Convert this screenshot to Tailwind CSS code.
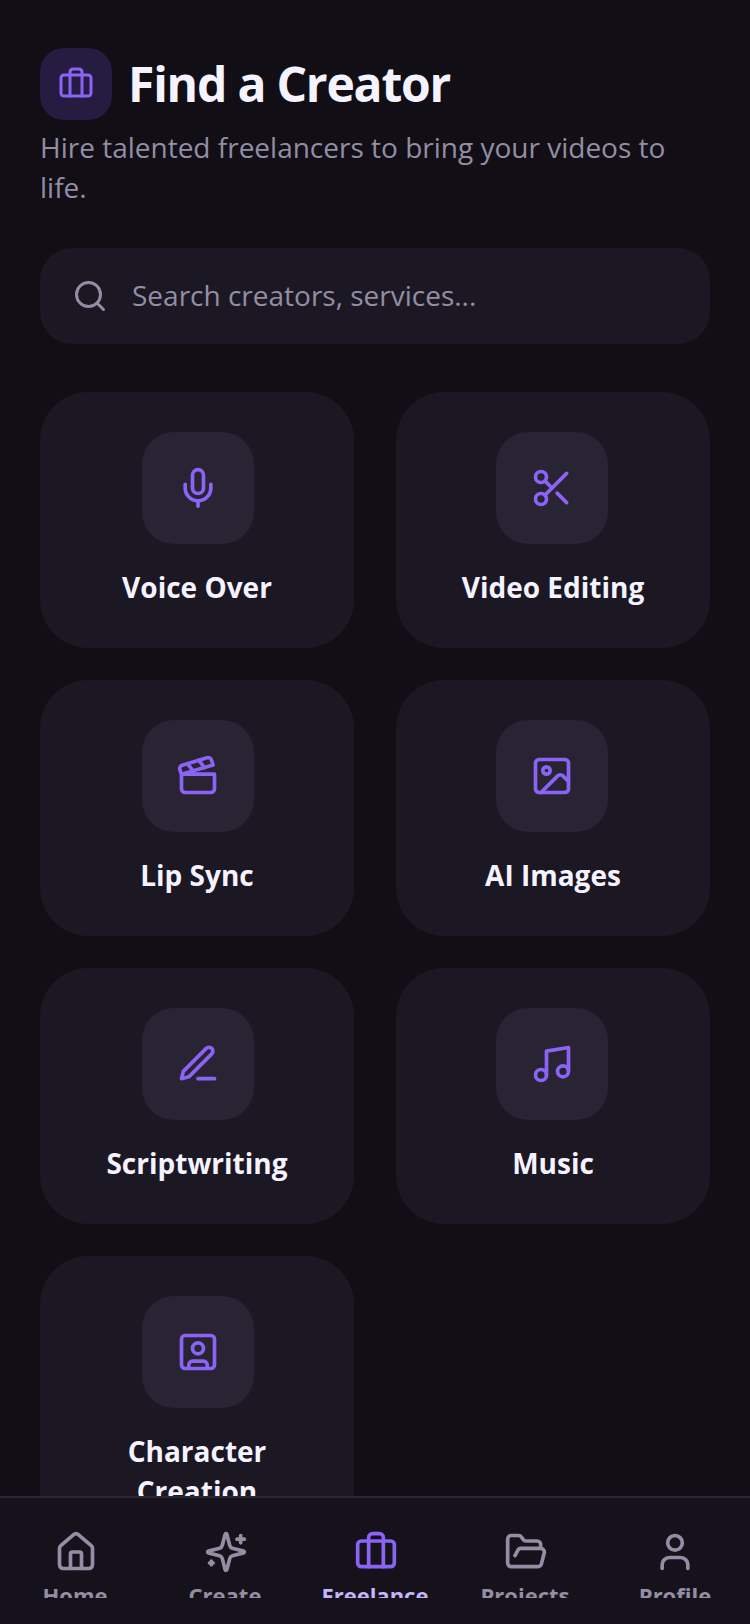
<!DOCTYPE html>
<html lang="en">
  <head>
    <meta charset="UTF-8" />
    <meta name="viewport" content="width=device-width, initial-scale=1.0" />
    <title>Find a Creator</title>
    <script src="https://cdn.jsdelivr.net/npm/@tailwindcss/browser@4"></script>
  </head>
  <body class="bg-[#110e16] font-['Open_Sans',sans-serif] h-[1624px] w-[750px] flex flex-col overflow-hidden">
    <!-- Main content -->
    <main class="flex-1 min-h-0 overflow-hidden px-10 pt-12">
      <div class="flex items-center gap-4">
        <div class="w-[72px] h-[72px] rounded-[24px] bg-[#261c42] flex items-center justify-center text-[#8b63f5]">
          <svg class="w-9 h-9" viewBox="0 0 24 24" fill="none" stroke="currentColor" stroke-width="2" stroke-linecap="round" stroke-linejoin="round"><path d="M16 20V4a2 2 0 0 0-2-2h-4a2 2 0 0 0-2 2v16"/><rect width="20" height="14" x="2" y="6" rx="2"/></svg>
        </div>
        <h1 class="text-[48px] leading-[56px] font-bold text-[#f5f3ff] tracking-[-1.2px]">Find a Creator</h1>
      </div>
      <p class="mt-[7px] text-[28px] leading-[40px] text-[#938ea3]">Hire talented freelancers to bring your videos to life.</p>

      <!-- Search -->
      <div class="mt-[41px] h-24 rounded-[32px] bg-[#1b1824] flex items-center pl-8 gap-6 text-[#938ea3]">
        <svg class="w-9 h-9" viewBox="0 0 24 24" fill="none" stroke="currentColor" stroke-width="2" stroke-linecap="round" stroke-linejoin="round"><path d="m21 21-4.34-4.34"/><circle cx="11" cy="11" r="8"/></svg>
        <span class="text-[28px] pb-[2px]">Search creators, services...</span>
      </div>

      <!-- Categories -->
      <div class="mt-12 grid grid-cols-2 gap-x-[42px] gap-y-8">
        <div class="h-[256px] rounded-[48px] bg-[#1b1824] pt-10 flex flex-col items-center">
          <div class="ml-[2px] w-28 h-28 rounded-[32px] bg-[#282433] flex items-center justify-center text-[#8b63f5]">
            <svg class="w-11 h-11" viewBox="0 0 24 24" fill="none" stroke="currentColor" stroke-width="2" stroke-linecap="round" stroke-linejoin="round"><path d="M12 2a3 3 0 0 0-3 3v7a3 3 0 0 0 6 0V5a3 3 0 0 0-3-3Z"/><path d="M19 10v2a7 7 0 0 1-14 0v-2"/><line x1="12" x2="12" y1="19" y2="22"/></svg>
          </div>
          <span class="mt-[23px] text-[28px] leading-[40px] font-bold text-[#f5f3ff] text-center">Voice Over</span>
        </div>
        <div class="h-[256px] rounded-[48px] bg-[#1b1824] pt-10 flex flex-col items-center">
          <div class="mr-[2px] w-28 h-28 rounded-[32px] bg-[#282433] flex items-center justify-center text-[#8b63f5]">
            <svg class="w-11 h-11" viewBox="0 0 24 24" fill="none" stroke="currentColor" stroke-width="2" stroke-linecap="round" stroke-linejoin="round"><circle cx="6" cy="6" r="3"/><path d="M8.12 8.12 12 12"/><path d="M20 4 8.12 15.88"/><circle cx="6" cy="18" r="3"/><path d="M14.8 14.8 20 20"/></svg>
          </div>
          <span class="mt-[23px] text-[28px] leading-[40px] font-bold text-[#f5f3ff] text-center">Video Editing</span>
        </div>
        <div class="h-[256px] rounded-[48px] bg-[#1b1824] pt-10 flex flex-col items-center">
          <div class="ml-[2px] w-28 h-28 rounded-[32px] bg-[#282433] flex items-center justify-center text-[#8b63f5]">
            <svg class="w-11 h-11" viewBox="0 0 24 24" fill="none" stroke="currentColor" stroke-width="2" stroke-linecap="round" stroke-linejoin="round"><path d="M20.2 6 3 11l-.9-2.4c-.3-1.1.3-2.2 1.3-2.5l13.5-4c1.1-.3 2.2.3 2.5 1.3Z"/><path d="m6.2 5.3 3.1 3.9"/><path d="m12.4 3.4 3.1 4"/><path d="M3 11h18v8a2 2 0 0 1-2 2H5a2 2 0 0 1-2-2Z"/></svg>
          </div>
          <span class="mt-[23px] text-[28px] leading-[40px] font-bold text-[#f5f3ff] text-center">Lip Sync</span>
        </div>
        <div class="h-[256px] rounded-[48px] bg-[#1b1824] pt-10 flex flex-col items-center">
          <div class="mr-[2px] w-28 h-28 rounded-[32px] bg-[#282433] flex items-center justify-center text-[#8b63f5]">
            <svg class="w-11 h-11" viewBox="0 0 24 24" fill="none" stroke="currentColor" stroke-width="2" stroke-linecap="round" stroke-linejoin="round"><rect width="18" height="18" x="3" y="3" rx="2" ry="2"/><circle cx="9" cy="9" r="2"/><path d="m21 15-3.086-3.086a2 2 0 0 0-2.828 0L6 21"/></svg>
          </div>
          <span class="mt-[23px] text-[28px] leading-[40px] font-bold text-[#f5f3ff] text-center">AI Images</span>
        </div>
        <div class="h-[256px] rounded-[48px] bg-[#1b1824] pt-10 flex flex-col items-center">
          <div class="ml-[2px] w-28 h-28 rounded-[32px] bg-[#282433] flex items-center justify-center text-[#8b63f5]">
            <svg class="w-11 h-11" viewBox="0 0 24 24" fill="none" stroke="currentColor" stroke-width="2" stroke-linecap="round" stroke-linejoin="round"><path d="M12 20h9"/><path d="M16.5 3.5a2.12 2.12 0 0 1 3 3L7 19l-4 1 1-4Z"/></svg>
          </div>
          <span class="mt-[23px] text-[28px] leading-[40px] font-bold text-[#f5f3ff] text-center">Scriptwriting</span>
        </div>
        <div class="h-[256px] rounded-[48px] bg-[#1b1824] pt-10 flex flex-col items-center">
          <div class="mr-[2px] w-28 h-28 rounded-[32px] bg-[#282433] flex items-center justify-center text-[#8b63f5]">
            <svg class="w-11 h-11" viewBox="0 0 24 24" fill="none" stroke="currentColor" stroke-width="2" stroke-linecap="round" stroke-linejoin="round"><path d="M9 18V5l12-2v13"/><circle cx="6" cy="18" r="3"/><circle cx="18" cy="16" r="3"/></svg>
          </div>
          <span class="mt-[23px] text-[28px] leading-[40px] font-bold text-[#f5f3ff] text-center">Music</span>
        </div>
        <div class="h-[296px] rounded-[48px] bg-[#1b1824] pt-10 flex flex-col items-center">
          <div class="ml-[2px] w-28 h-28 rounded-[32px] bg-[#282433] flex items-center justify-center text-[#8b63f5]">
            <svg class="w-11 h-11" viewBox="0 0 24 24" fill="none" stroke="currentColor" stroke-width="2" stroke-linecap="round" stroke-linejoin="round"><rect width="18" height="18" x="3" y="3" rx="2"/><circle cx="12" cy="10" r="3"/><path d="M7 21v-2a2 2 0 0 1 2-2h6a2 2 0 0 1 2 2v2"/></svg>
          </div>
          <span class="mt-[23px] px-10 text-[28px] leading-[40px] font-bold text-[#f5f3ff] text-center">Character Creation</span>
        </div>
      </div>
    </main>

    <!-- Bottom nav -->
    <nav class="shrink-0 h-[128px] bg-[#16121b] border-t-2 border-[#2a2636] pt-8 grid grid-cols-5">
      <div class="h-[68px] overflow-hidden flex flex-col items-center text-[#938ea3]">
        <svg class="ml-[2px] w-11 h-11 shrink-0" viewBox="0 0 24 24" fill="none" stroke="currentColor" stroke-width="2" stroke-linecap="round" stroke-linejoin="round"><path d="M15 21v-8a1 1 0 0 0-1-1h-4a1 1 0 0 0-1 1v8"/><path d="M3 10a2 2 0 0 1 .709-1.528l7-5.999a2 2 0 0 1 2.582 0l7 5.999A2 2 0 0 1 21 10v9a2 2 0 0 1-2 2H5a2 2 0 0 1-2-2z"/></svg>
        <span class="mt-[6px] text-[22px] leading-[30px] font-bold">Home</span>
      </div>
      <div class="h-[68px] overflow-hidden flex flex-col items-center text-[#938ea3]">
        <svg class="ml-[2px] w-11 h-11 shrink-0" viewBox="0 0 24 24" fill="none" stroke="currentColor" stroke-width="2" stroke-linecap="round" stroke-linejoin="round"><path d="M9.937 15.5A2 2 0 0 0 8.5 14.063l-6.135-1.582a.5.5 0 0 1 0-.962L8.5 9.936A2 2 0 0 0 9.937 8.5l1.582-6.135a.5.5 0 0 1 .963 0L14.063 8.5A2 2 0 0 0 15.5 9.937l6.135 1.581a.5.5 0 0 1 0 .964L15.5 14.063a2 2 0 0 0-1.437 1.437l-1.582 6.135a.5.5 0 0 1-.963 0z"/><path d="M20 3v4"/><path d="M22 5h-4"/><path d="M4 17v2"/><path d="M5 18H3"/></svg>
        <span class="mt-[6px] text-[22px] leading-[30px] font-bold">Create</span>
      </div>
      <div class="h-[68px] overflow-hidden flex flex-col items-center text-[#8b63f5]">
        <svg class="ml-[2px] w-11 h-11 shrink-0" viewBox="0 0 24 24" fill="none" stroke="currentColor" stroke-width="2" stroke-linecap="round" stroke-linejoin="round"><path d="M16 20V4a2 2 0 0 0-2-2h-4a2 2 0 0 0-2 2v16"/><rect width="20" height="14" x="2" y="6" rx="2"/></svg>
        <span class="mt-[6px] text-[22px] leading-[30px] font-bold text-[#c4b5fd]">Freelance</span>
      </div>
      <div class="h-[68px] overflow-hidden flex flex-col items-center text-[#938ea3]">
        <svg class="ml-[2px] w-11 h-11 shrink-0" viewBox="0 0 24 24" fill="none" stroke="currentColor" stroke-width="2" stroke-linecap="round" stroke-linejoin="round"><path d="m6 14 1.5-2.9A2 2 0 0 1 9.24 10H20a2 2 0 0 1 1.94 2.5l-1.54 6a2 2 0 0 1-1.95 1.5H4a2 2 0 0 1-2-2V5a2 2 0 0 1 2-2h3.9a2 2 0 0 1 1.69.9l.81 1.2a2 2 0 0 0 1.69.9H18a2 2 0 0 1 2 2v2"/></svg>
        <span class="mt-[6px] text-[22px] leading-[30px] font-bold">Projects</span>
      </div>
      <div class="h-[68px] overflow-hidden flex flex-col items-center text-[#938ea3]">
        <svg class="w-11 h-11 shrink-0" viewBox="0 0 24 24" fill="none" stroke="currentColor" stroke-width="2" stroke-linecap="round" stroke-linejoin="round"><path d="M19 21v-2a4 4 0 0 0-4-4H9a4 4 0 0 0-4 4v2"/><circle cx="12" cy="7" r="4"/></svg>
        <span class="mt-[6px] text-[22px] leading-[30px] font-bold">Profile</span>
      </div>
    </nav>
  </body>
</html>
